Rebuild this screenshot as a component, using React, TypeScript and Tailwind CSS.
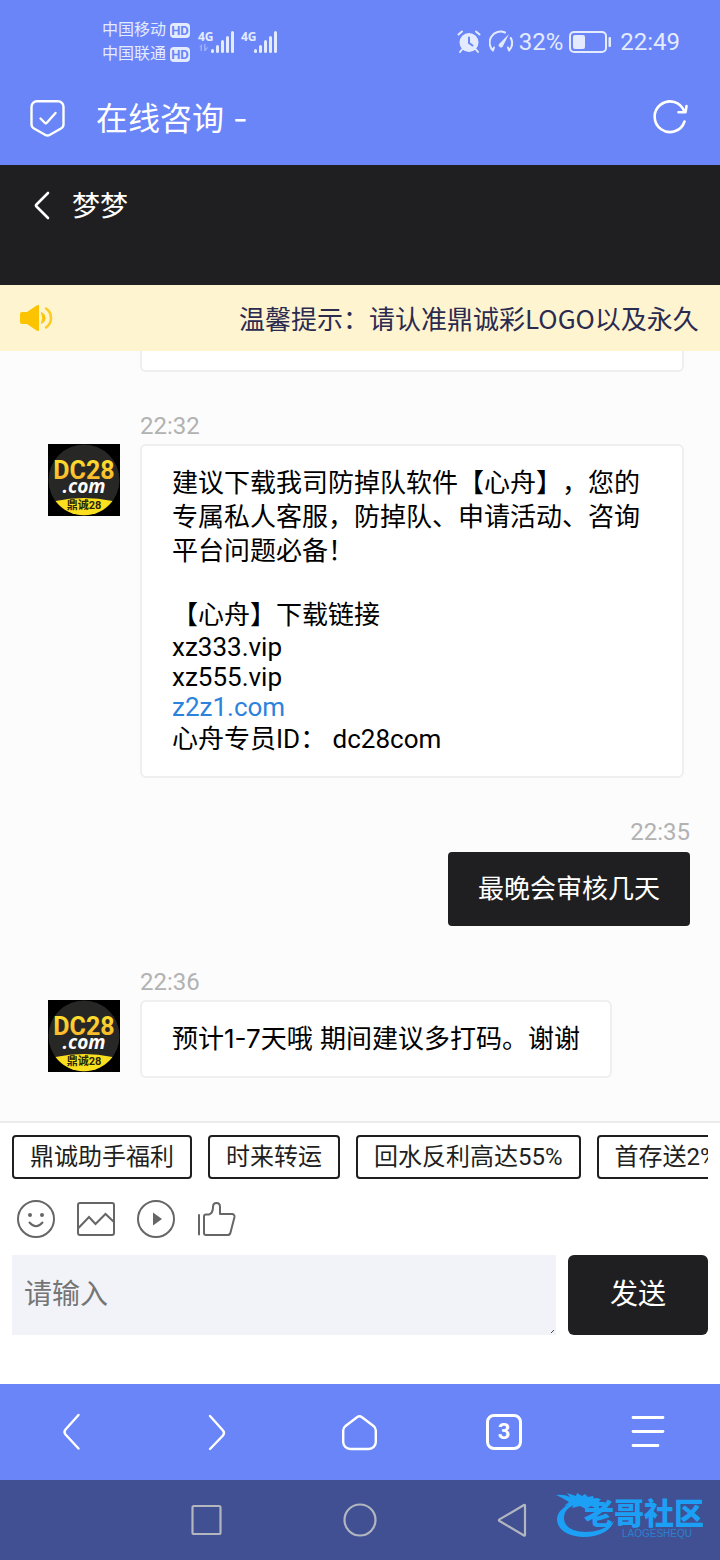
import type { ReactNode } from 'react';

const quickReplies = ['鼎诚助手福利', '时来转运', '回水反利高达55%', '首存送2%'];

function SignalIcon({ roaming = false }: { roaming?: boolean }) {
  return (
    <svg width="37" height="26" viewBox="0 0 37 26" fill="currentColor" aria-label="4G">
      <text x="0" y="12" fontSize="12" fontWeight="700" fontFamily="Open Sans, sans-serif">
        4G
      </text>
      {roaming && (
        <g opacity="0.4">
          <path d="M1 18l3-3v7H2.500v-4zM6 15h1.500v4l3-1-3 4H6z" />
        </g>
      )}
      <rect x="13" y="20" width="3" height="4" rx="1.500" />
      <rect x="18" y="16" width="3" height="8" rx="1.500" />
      <rect x="23" y="11" width="3" height="13" rx="1.500" />
      <rect x="28" y="7" width="3" height="17" rx="1.500" />
      <rect x="33" y="2" width="3" height="22" rx="1.500" />
    </svg>
  );
}

function Carrier({ name }: { name: string }) {
  return (
    <div className="flex items-center gap-1">
      <span className="text-[16px] leading-6">{name}</span>
      <span className="flex h-[15px] w-5 items-center justify-center rounded-[4px] bg-[#e4ebff] text-[13px] leading-none font-bold text-[#6985f8]">
        HD
      </span>
    </div>
  );
}

function StatusBar() {
  return (
    <div className="flex h-[72px] items-center justify-between pt-3 pr-10 pl-[102px] text-[#e4ebff]">
      <div className="flex items-center">
        <div>
          <Carrier name="中国移动" />
          <Carrier name="中国联通" />
        </div>
        <div className="ml-2 flex gap-1.5">
          <SignalIcon roaming />
          <SignalIcon />
        </div>
      </div>
      <div className="flex items-center text-[24px] leading-7">
        <svg width="24" height="24" viewBox="0 0 24 24" fill="none" stroke="currentColor" strokeWidth="2" strokeLinecap="round">
          <circle cx="12" cy="12.500" r="9.500" fill="currentColor" stroke="none" />
          <path d="M1.500 4.500l3.500-3M22.500 4.500l-3.500-3M5 19.500l-2 2.500M19 19.500l2 2.500" />
          <path d="M12 7.500v5.500l3.500 2.500" stroke="#6985f8" />
        </svg>
        <svg className="ml-2" width="24" height="24" viewBox="0 0 24 24" fill="none" stroke="currentColor" strokeWidth="2" strokeLinecap="round">
          <path d="M4 20.500A11 11 0 0 1 16 2.500M21.800 8A11 11 0 0 1 20 20.500M4 20.500l1-3M20 20.500l-1-3" />
          <path d="M20 4l-6 12a2.200 2.200 0 1 1-3.500-2.500z" fill="currentColor" stroke="none" />
        </svg>
        <span className="ml-1.5">32%</span>
        <svg className="ml-1.5" width="43" height="24" viewBox="0 0 43 24" fill="none">
          <rect x="1" y="2" width="36" height="20" rx="4" stroke="currentColor" strokeWidth="2" />
          <rect x="4" y="5" width="12" height="14" rx="2" fill="currentColor" />
          <rect x="39.500" y="7" width="2.500" height="10" rx="1" fill="currentColor" />
        </svg>
        <span className="ml-2">22:49</span>
      </div>
    </div>
  );
}

function BrowserHeader() {
  return (
    <div className="flex h-[93px] items-center pr-8 pl-7 text-white">
      <svg width="40" height="40" viewBox="0 0 40 40" fill="none" stroke="currentColor" strokeWidth="2.400" strokeLinecap="round" strokeLinejoin="round">
        <path d="M9 2.200h21a5.500 5.500 0 0 1 5.500 5.500v17.500a5 5 0 0 1-2.500 4.300l-11 6.300a5 5 0 0 1-5 0l-11-6.300a5 5 0 0 1-2.500-4.300V7.700A5.500 5.500 0 0 1 9 2.200z" />
        <path d="M12.500 19.500l4.500 4.500q.8.800 1.600 0L27.500 14" />
      </svg>
      <h1 className="ml-7 flex-1 font-['Inter','Noto_Sans_CJK_SC',sans-serif] text-[32px] leading-10">在线咨询 -</h1>
      <button type="button" aria-label="刷新">
        <svg width="36" height="40" viewBox="0 0 36 40" fill="none" stroke="currentColor" strokeWidth="2.600" strokeLinecap="round" strokeLinejoin="round">
          <path d="M32.500 22.500A15.300 15.300 0 1 1 32.300 12.500M34.500 7L33.500 13.200l-7 0" />
        </svg>
      </button>
    </div>
  );
}

function Notice() {
  return (
    <div className="flex h-[66px] items-center overflow-hidden bg-[#fef4d0] pl-5">
      <svg className="shrink-0" width="34" height="28" viewBox="0 0 34 28" fill="none">
        <path d="M2 8h5L17 1.200q2-1 2 1v23.600q0 2-2 1L7 20H2a2 2 0 0 1-2-2v-8a2 2 0 0 1 2-2z" fill="#fcc400" />
        <path d="M21.500 8.500a6 6 0 0 1 0 11q2.500-5.500 0-11z" fill="#fcc400" stroke="#fcc400" strokeLinejoin="round" />
        <path d="M26 4.500a11.500 11.500 0 0 1 0 19" stroke="#fccb20" strokeWidth="2.500" strokeLinecap="round" />
      </svg>
      <p className="ml-[185px] flex-1 overflow-hidden font-['Noto_Sans_CJK_SC',sans-serif] text-[26px] leading-10 whitespace-nowrap text-[#2b2b50]">
        温馨提示：请认准鼎诚彩LOGO以及永久
      </p>
    </div>
  );
}

function Avatar() {
  return (
    <svg className="mt-8 shrink-0" width="72" height="72" viewBox="0 0 72 72" textAnchor="middle" aria-label="DC28.com">
      <defs>
        <linearGradient id="gold" x1="0" y1="0" x2="0" y2="1">
          <stop offset="0" stopColor="#ffe52e" />
          <stop offset="1" stopColor="#f9ae2b" />
        </linearGradient>
      </defs>
      <rect width="72" height="72" fill="#000" />
      <circle cx="36" cy="36" r="35.500" fill="#272826" />
      <path d="M7.500 57Q36 51 64.500 57A35.500 35.500 0 0 1 7.500 57z" fill="#fce01f" />
      <text x="36" y="35" fontSize="25" fontWeight="700" fontFamily="Roboto, sans-serif" fill="url(#gold)">
        DC28
      </text>
      <text x="36" y="49" fontSize="19" fontWeight="700" fontStyle="italic" fontFamily="Open Sans, sans-serif" fill="#fff">
        .com
      </text>
      <text x="36" y="65" fontSize="11" fontWeight="700" fontFamily="Roboto, Noto Sans CJK SC, sans-serif" fill="#2a2608">
        鼎诚28
      </text>
    </svg>
  );
}

function ServiceMessage({ time, children }: { time: string; children: ReactNode }) {
  return (
    <div className="flex gap-5 pr-9 pl-12">
      <Avatar />
      <div>
        <time className="mb-1 block text-[24px] leading-7 text-[#b2b2b2]">{time}</time>
        <div className="rounded-md border-2 border-[#efefef] bg-white px-[30px] py-5 text-[26px] leading-[34px] text-black">
          {children}
        </div>
      </div>
    </div>
  );
}

function OwnMessage({ time, children }: { time: string; children: ReactNode }) {
  return (
    <div className="mb-0.5 flex flex-col items-end pr-[30px]">
      <time className="mb-1.5 text-[24px] leading-7 text-[#b2b2b2]">{time}</time>
      <div className="rounded-[4px] bg-[#1f1f21] px-[30px] py-5 text-[26px] leading-[34px] text-white">
        {children}
      </div>
    </div>
  );
}

function Tools() {
  return (
    <div className="mt-5 flex gap-5 pl-1 text-[#666]">
      <button type="button" aria-label="表情">
        <svg width="40" height="40" viewBox="0 0 40 40" fill="none" stroke="currentColor" strokeWidth="2" strokeLinecap="round">
          <circle cx="20" cy="20" r="18" />
          <path d="M13.500 23.500Q20 31 26.500 23.500" />
          <circle cx="14" cy="16" r="2" fill="currentColor" stroke="none" />
          <circle cx="26" cy="16" r="2" fill="currentColor" stroke="none" />
        </svg>
      </button>
      <button type="button" aria-label="图片">
        <svg width="40" height="40" viewBox="0 0 40 40" fill="none" stroke="currentColor" strokeWidth="2">
          <rect x="2" y="4" width="36" height="32" rx="2" />
          <path d="M2.500 29L13 18l6.500 7L29.500 15 38 23" />
        </svg>
      </button>
      <button type="button" aria-label="视频">
        <svg width="40" height="40" viewBox="0 0 40 40" fill="none" stroke="currentColor" strokeWidth="2">
          <circle cx="20" cy="20" r="18" />
          <path d="M17 13.500l9 6.500-9 6.500z" fill="currentColor" stroke="none" />
        </svg>
      </button>
      <button type="button" aria-label="评价">
        <svg width="40" height="40" viewBox="0 0 40 40" fill="none" stroke="currentColor" strokeWidth="2" strokeLinecap="round" strokeLinejoin="round">
          <path d="M3 16v19.500M8 17.500v16.500a2 2 0 0 0 2 2h21.500a3 3 0 0 0 3-2.500L38.500 18a2.500 2.500 0 0 0-2.500-3H24V8q0-4-3.500-4T17 8c0 4-1 6.500-4 7.500H10a2 2 0 0 0-2 2z" />
        </svg>
      </button>
    </div>
  );
}

function NavBar() {
  return (
    <nav className="grid h-24 grid-cols-5 place-items-center bg-[#6985f8] text-white">
      <button type="button" aria-label="后退">
        <svg width="40" height="40" viewBox="0 0 40 40" fill="none" stroke="currentColor" strokeWidth="2.400" strokeLinecap="round" strokeLinejoin="round">
          <path d="M26.500 3L13.500 17.500q-2 2.500 0 5L26.500 36.500" />
        </svg>
      </button>
      <button type="button" aria-label="前进">
        <svg width="40" height="40" viewBox="0 0 40 40" fill="none" stroke="currentColor" strokeWidth="2.400" strokeLinecap="round" strokeLinejoin="round">
          <path d="M14 4L27 18.500q2 2.500 0 5L14 37" />
        </svg>
      </button>
      <button type="button" aria-label="主页">
        <svg width="40" height="40" viewBox="0 0 40 40" fill="none" stroke="currentColor" strokeWidth="2.400" strokeLinejoin="round">
          <path d="M17 5.200L5.500 14q-2.300 1.800-2.300 4.500V30a7 7 0 0 0 7 7h18.600a7 7 0 0 0 7-7V18.500q0-2.700-2.300-4.500L22 5.200q-2.500-1.800-5 0z" />
        </svg>
      </button>
      <button
        type="button"
        aria-label="标签页"
        className="flex h-9 w-9 items-center justify-center rounded-lg border-[3px] border-white text-[22px] leading-none font-bold"
      >
        3
      </button>
      <button type="button" aria-label="菜单">
        <svg width="36" height="36" viewBox="0 0 36 36" fill="none" stroke="currentColor" strokeWidth="2.800" strokeLinecap="round">
          <path d="M3 3.500h30M3 17.500h30M3 31.500h25" />
        </svg>
      </button>
    </nav>
  );
}

function SiteLogo() {
  return (
    <div className="absolute top-2 right-4 w-[148px] pt-3 text-[#1ca0f5]">
      <svg className="absolute top-0 left-0" width="64" height="56" viewBox="0 0 64 56" fill="currentColor">
        <path d="M22 13C8 17 1 24 1 31c0 11 12 18 27 18 16 0 27-7 30-16-7 7-17 11-28 11-13 0-22-5-22-14 0-8 6-13 18-15z" />
        <path d="M0 7q8-1 14 2l-3-4 9 3 1-3 5 3 3-2 3 3 5-1 1 3 7 0-3 4 4 1-5 1 2 4-8-3-5 3-6-3-8 2 2-4-10 2 5-4Q7 10 0 7z" />
      </svg>
      <div className="relative flex flex-col items-end">
        <span className="text-[30px] leading-7 font-black">老哥社区</span>
        <span className="pr-3 font-['Liberation_Sans',sans-serif] text-[10px] leading-3 opacity-60">LAOGESHEQU</span>
      </div>
    </div>
  );
}

function SystemBar() {
  return (
    <div className="relative flex h-20 items-center justify-center gap-28 bg-[#405093] text-[#b3b5bf]">
      <button type="button" aria-label="最近任务">
        <svg width="40" height="40" viewBox="0 0 40 40" fill="none" stroke="currentColor" strokeWidth="2.200">
          <rect x="4.500" y="6" width="28" height="28" rx="1.500" />
        </svg>
      </button>
      <button type="button" aria-label="桌面">
        <svg width="40" height="40" viewBox="0 0 40 40" fill="none" stroke="currentColor" strokeWidth="2.200">
          <circle cx="20" cy="20" r="15.500" />
        </svg>
      </button>
      <button type="button" aria-label="返回">
        <svg width="40" height="40" viewBox="0 0 40 40" fill="none" stroke="currentColor" strokeWidth="2.200" strokeLinejoin="round">
          <path d="M33 5.500v29.500q0 1-1 .500L7.500 21q-1.200-.8 0-1.600L32 5q1-.500 1 .500z" />
        </svg>
      </button>
      <SiteLogo />
    </div>
  );
}

export default function App() {
  return (
    <div className="flex min-h-screen flex-col bg-white font-['Roboto','Noto_Sans_CJK_SC',sans-serif] [text-spacing-trim:space-all]" lang="zh-CN">
      <header className="bg-[#6985f8]">
        <StatusBar />
        <BrowserHeader />
      </header>

      <div className="h-[120px] bg-[#1f1f21] px-7 pt-5 text-white">
        <div className="flex items-start gap-4">
          <button type="button" aria-label="返回">
            <svg width="28" height="40" viewBox="0 0 28 40" fill="none" stroke="currentColor" strokeWidth="2.600" strokeLinecap="round" strokeLinejoin="round">
              <path d="M20 8L8.500 19.500q-1 1 0 2L20 33" />
            </svg>
          </button>
          <h2 className="text-[28px] leading-[44px]">梦梦</h2>
        </div>
      </div>

      <Notice />

      <main className="flex flex-1 flex-col gap-10 bg-[#fcfcfc] pb-[43px]">
        {/* tail of the previous message, scrolled under the notice */}
        <div className="mr-9 ml-[140px] h-[21px] rounded-b-md border-2 border-t-0 border-[#efefef] bg-white" />

        <ServiceMessage time="22:32">
          <p>建议下载我司防掉队软件【心舟】，您的专属私人客服，防掉队、申请活动、咨询平台问题必备！</p>
          <p className="mt-[30px]">【心舟】下载链接</p>
          <p className="leading-[30px]">xz333.vip</p>
          <p className="leading-[30px]">xz555.vip</p>
          <p className="leading-[30px]">
            <a href="#z2z1" className="text-[#2c82dc]">
              z2z1.com
            </a>
          </p>
          <p>心舟专员ID： dc28com</p>
        </ServiceMessage>

        <OwnMessage time="22:35">最晚会审核几天</OwnMessage>

        <ServiceMessage time="22:36">
          <p className="font-['Inter','Noto_Sans_CJK_SC',sans-serif]">预计1-7天哦 期间建议多打码。谢谢</p>
        </ServiceMessage>
      </main>

      <footer className="border-t-2 border-[#ebebeb] bg-white px-3 pt-3 pb-[49px]">
        <div className="flex gap-4 overflow-hidden">
          {quickReplies.map((text) => (
            <button
              key={text}
              type="button"
              className="h-11 shrink-0 rounded-[4px] border-2 border-[#1f1f21] px-4 text-[24px] leading-10 whitespace-nowrap text-[#1f1f21]"
            >
              {text}
            </button>
          ))}
        </div>
        <Tools />
        <form className="mt-4 flex gap-3" onSubmit={(e) => e.preventDefault()}>
          <div className="relative flex flex-1">
            <textarea
              aria-label="请输入"
              placeholder="请输入"
              className="h-20 w-full resize-none overflow-hidden bg-[#f2f3f8] px-3 py-5 text-[28px] leading-10 outline-none placeholder:text-[#757575]"
            />
            <svg className="absolute right-0.5 bottom-0.5" width="3" height="3" viewBox="0 0 3 3" stroke="#444">
              <path d="M0 3L3 0" />
            </svg>
          </div>
          <button type="submit" className="h-20 w-[140px] rounded-md bg-[#1f1f21] text-[28px] leading-10 text-white">
            发送
          </button>
        </form>
      </footer>

      <NavBar />
      <SystemBar />
    </div>
  );
}
